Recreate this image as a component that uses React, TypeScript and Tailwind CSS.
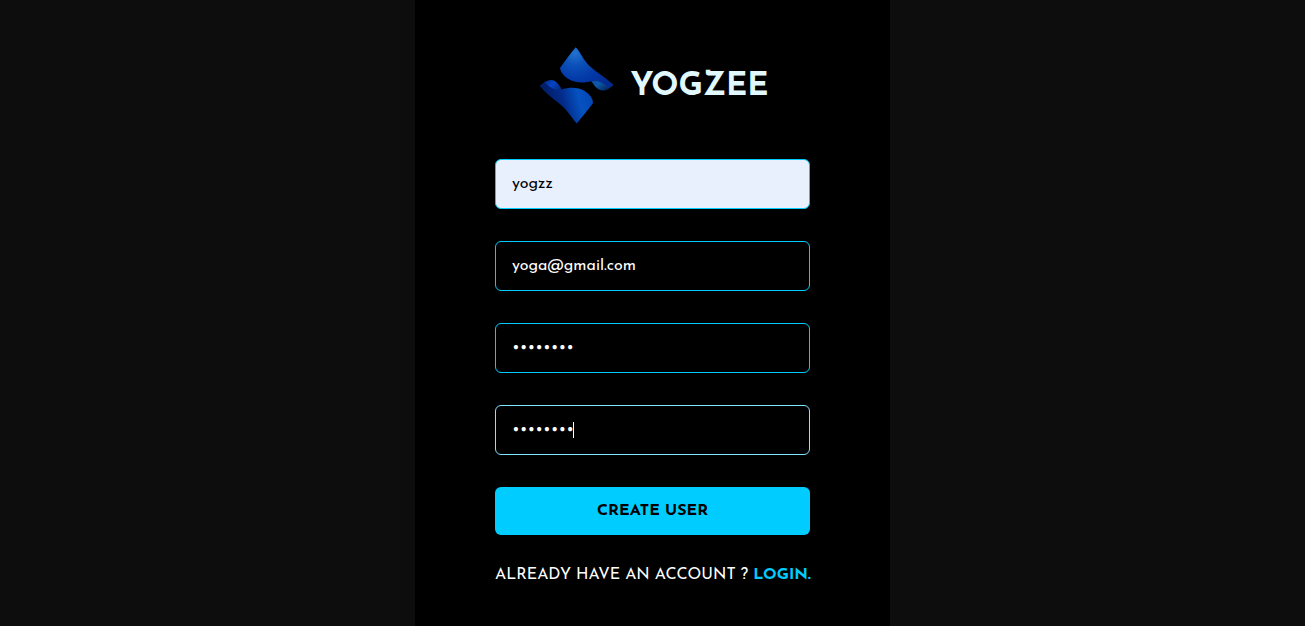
import { useState } from "react";

function Logo() {
  return (
    <svg viewBox="-2 0 78 80" className="h-20 w-[78px] shrink-0" aria-hidden="true">
      <defs>
        <radialGradient id="top" gradientUnits="userSpaceOnUse" cx="37" cy="9" r="42">
          <stop offset="0" stopColor="#2272cf" />
          <stop offset="0.3" stopColor="#0b50b8" />
          <stop offset="0.65" stopColor="#0338a8" />
          <stop offset="1" stopColor="#032c90" />
        </radialGradient>
        <linearGradient id="bottom" gradientUnits="userSpaceOnUse" x1="12" y1="60" x2="50" y2="50">
          <stop offset="0" stopColor="#021f6c" />
          <stop offset="0.35" stopColor="#032c8c" />
          <stop offset="0.75" stopColor="#0552c0" />
          <stop offset="1" stopColor="#0449b8" />
        </linearGradient>
        <linearGradient id="curlLeft" x1="0" y1="0.2" x2="1" y2="0.6">
          <stop offset="0" stopColor="#02246c" />
          <stop offset="0.55" stopColor="#0545c8" />
          <stop offset="1" stopColor="#032c84" />
        </linearGradient>
        <linearGradient id="curlRight" x1="0" y1="0" x2="1" y2="0.6">
          <stop offset="0" stopColor="#0a4ba4" />
          <stop offset="0.4" stopColor="#0f5aa8" />
          <stop offset="1" stopColor="#022057" />
        </linearGradient>
      </defs>
      <path d="M2 42C6 38 9 36 13 36C18 36 21 41 24 45.500C17 48 9 47 2 42Z" fill="url(#curlLeft)" />
      <path d="M75.500 41C71 45 68 47 64.500 46.500C58 46 56 40 53 37C60 35 69 36 75.500 41Z" fill="url(#curlRight)" />
      <path d="M37.700 3.300C41 6 44 13 48 18C54 26 65 31 75.500 41L70.500 44C66 39 60 36 53.500 37C46 39.500 36 39 29.500 34.500C26 32 22.500 28 22 24C27 17 32 10 37.700 3.300Z" fill="url(#top)" />
      <path d="M2 42L7 38.500C11 43 17 47 23.500 45.500C31 43 40 43 46 46.500C51 49.500 55 54 55 59C50 66 44 73 38.700 79.500C33 73 30 67 23 61C16 55 8 50 2 42Z" fill="url(#bottom)" />
    </svg>
  );
}

const fieldClass =
  "block h-[50px] w-full rounded-md border px-4 text-base leading-6 outline-none";

export default function App() {
  const [name, setName] = useState("yogzz");
  const [email, setEmail] = useState("yoga@gmail.com");
  const [password, setPassword] = useState("password");
  const [confirm, setConfirm] = useState("password");

  return (
    <main className="flex min-h-screen justify-center bg-[#0d0d0d] font-['Josefin_Sans',Lato,sans-serif]">
      <form
        className="flex w-full max-w-[475px] flex-col gap-8 bg-black px-20 pt-11"
        onSubmit={(event) => event.preventDefault()}
      >
        <div className="flex items-center justify-center gap-4 pb-[3px]">
          <Logo />
          <h1 className="pt-1.5 text-[32px] leading-10 font-bold text-[#e1f8ff]">YOGZEE</h1>
        </div>
        <input
          aria-label="Username"
          type="text"
          value={name}
          onChange={(event) => setName(event.target.value)}
          className={`${fieldClass} border-[#00ccff] bg-[#e8f0fe] text-black`}
        />
        <input
          aria-label="Email"
          type="email"
          value={email}
          onChange={(event) => setEmail(event.target.value)}
          className={`${fieldClass} border-[#00ccff] bg-black text-white`}
        />
        <input
          aria-label="Password"
          type="password"
          value={password}
          onChange={(event) => setPassword(event.target.value)}
          className={`${fieldClass} border-[#00ccff] bg-black text-white`}
        />
        <div className="relative">
          <input
            aria-label="Confirm password"
            type="password"
            value={confirm}
            onChange={(event) => setConfirm(event.target.value)}
            className={`${fieldClass} border-[#80e5ff] bg-black text-white caret-transparent`}
          />
          <span aria-hidden="true" className="pointer-events-none absolute top-[17px] left-[78px] h-4 w-px bg-white" />
        </div>
        <button
          type="submit"
          className="h-12 w-full rounded-md bg-[#00ccff] text-base font-bold text-black"
        >
          CREATE USER
        </button>
        <p className="-mt-1 text-base leading-6 whitespace-nowrap text-white">
          ALREADY HAVE AN ACCOUNT ?{" "}
          <a href="#login" className="font-bold text-[#00ccff]">
            LOGIN.
          </a>
        </p>
      </form>
    </main>
  );
}
